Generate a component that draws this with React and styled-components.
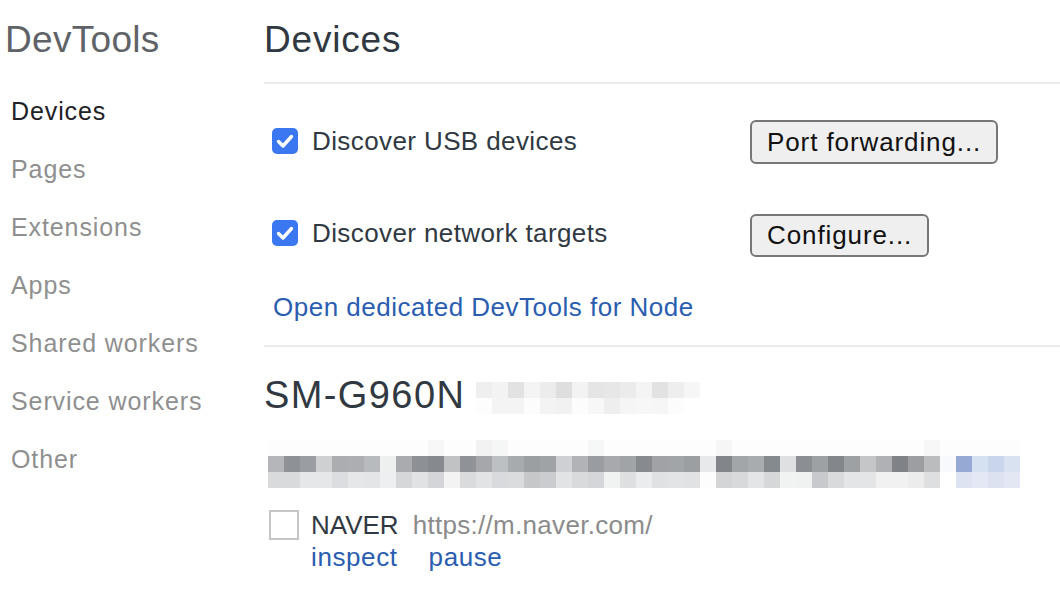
import React from "react";
import styled, { createGlobalStyle } from "styled-components";

const GlobalStyle = createGlobalStyle`
  body {
    margin: 0;
    background: #ffffff;
    font-family: "Liberation Sans", Arial, sans-serif;
  }
`;

const Page = styled.div`
  display: flex;
  width: 1060px;
  height: 598px;
  overflow: hidden;
`;

const Sidebar = styled.nav`
  width: 264px;
  flex-shrink: 0;
  display: flex;
  flex-direction: column;
`;

const SideTitle = styled.h1`
  margin: 0 0 2px;
  padding-left: 5px;
  height: 80px;
  line-height: 80px;
  font-size: 37px;
  font-weight: 400;
  letter-spacing: 0.3px;
  color: #5f6368;
`;

const SideItem = styled.div`
  padding-left: 11px;
  height: 58px;
  line-height: 58px;
  font-size: 25px;
  letter-spacing: 0.9px;
  color: ${(p) => (p.active ? "#202124" : "#8f8f8f")};
`;

const Main = styled.main`
  flex: 1;
  display: flex;
  flex-direction: column;
`;

const Header = styled.div`
  height: 82px;
  border-bottom: 2px solid #ebebeb;
`;

const Heading = styled.h1`
  margin: 0;
  line-height: 80px;
  font-size: 37px;
  font-weight: 400;
  letter-spacing: 0.8px;
  color: #303942;
`;

const Options = styled.section`
  display: flex;
  flex-direction: column;
  gap: 48px;
  padding: 35px 0 0 8px;
`;

const OptionRow = styled.div`
  display: flex;
  align-items: center;
  height: 44px;
`;

const Label = styled.label`
  display: flex;
  align-items: center;
  gap: 14px;
  width: 478px;
  font-size: 26px;
  letter-spacing: 0.4px;
  color: #303942;
`;

const Check = styled.span`
  width: 26px;
  height: 26px;
  border-radius: 5px;
  background: #3a77f0;
  display: flex;
  align-items: center;
  justify-content: center;
`;

const Button = styled.button`
  height: ${(p) => p.h}px;
  padding: 0 15px;
  margin-top: ${(p) => p.top}px;
  border: 2px solid #777777;
  border-radius: 6px;
  background: #efefef;
  font-family: "Liberation Sans", Arial, sans-serif;
  font-size: 26px;
  letter-spacing: 0.9px;
  color: #111111;
`;

const NodeLink = styled.a`
  display: block;
  margin: 37px 0 0 9px;
  line-height: 30px;
  font-size: 26px;
  letter-spacing: 0.5px;
  color: #2a5db0;
  text-decoration: none;
`;

const Divider = styled.div`
  margin-top: 23px;
  height: 2px;
  background: #ebebeb;
`;

const DeviceHead = styled.div`
  display: flex;
  align-items: center;
  gap: 11px;
  margin-top: 26px;
  height: 44px;
`;

const DeviceName = styled.h2`
  margin: 0;
  font-size: 38px;
  font-weight: 400;
  letter-spacing: 1.4px;
  color: #303942;
`;

const Mosaic = styled.svg`
  display: block;
  flex-shrink: 0;
  margin: ${(p) => p.m || "0"};
`;

const Target = styled.div`
  display: flex;
  align-items: flex-start;
  gap: 12px;
  margin: 21px 0 0 5px;
`;

const EmptyBox = styled.span`
  width: 26px;
  height: 26px;
  margin-top: 1px;
  border: 2px solid #c6c6c6;
`;

const TargetText = styled.div`
  display: flex;
  flex-direction: column;
  font-size: 26px;
  line-height: 32px;
  letter-spacing: 0.3px;
`;

const TargetLine = styled.div`
  display: flex;
  gap: ${(p) => p.gap}px;
`;

const Name = styled.span`
  color: #303942;
  letter-spacing: 0;
`;

const Url = styled.span`
  color: #8b8b8b;
`;

const Action = styled.a`
  color: #2a5db0;
  letter-spacing: 0.6px;
  text-decoration: none;
`;

const titleCells = [
  ["#efefef", "#f3f3f3", "#e2e2e2", "#f4f4f4", "#ececec", "#dedede", "#f3f3f3", "#e5e5e5", "#e7e7e7", "#ebebeb", "#f4f4f4", "#e2e2e2", "#eeeeee", "#f6f6f6"],
  ["#fdfdfd", "#f4f4f4", "#f4f4f4", "#fcfcfc", "#f3f3f3", "#f1f1f1", "#fcfcfc", "#f7f7f7", "#eeeeee", "#f5f5f5", "#f7f7f7", "#f6f6f6", "#fcfcfc", "#ffffff"],
];

const faint = Array(47).fill("#fdfdfd");
[[10, "#f6f7f6"], [13, "#f2f2f2"], [14, "#f5f6f6"], [20, "#f6f7f7"], [28, "#f6f6f6"], [41, "#f6f7f6"]].forEach(
  ([i, c]) => (faint[i] = c)
);

const serialCells = [
  faint,
  [
    "#b4b6b9", "#8e9195", "#9a9da1", "#cfd0d2", "#abadb1", "#adaeb1", "#b8bbbe", "#eeefef", "#a9abae", "#8d9196",
    "#868a8f", "#c1c2c4", "#8f9297", "#a5a7ab", "#bdc0c3", "#a8abad", "#9b9fa2", "#a0a3a5", "#cfd0d3", "#b1b3b6",
    "#999ca0", "#a8a9ad", "#a1a4a7", "#878b8f", "#a0a2a5", "#a2a5a8", "#9c9fa2", "#e8e9ea", "#82868b", "#a3a6a8",
    "#a9acae", "#858a8e", "#dfe0e1", "#8b8e93", "#9ea1a4", "#83878b", "#9ea1a3", "#c5c6c8", "#afb1b4", "#7f8287",
    "#9c9ea2", "#bbbcbe", "#f7f9fd", "#96a8d4", "#d5e0f1", "#c8d5ea", "#d8e2f0",
  ],
  [
    "#d9dadc", "#d9dadc", "#e6e7e8", "#e6e7e8", "#dcdde0", "#e6e7e9", "#e4e5e7", "#eeeff0", "#d6d7d9", "#e1e2e4",
    "#d4d5d8", "#f3f3f3", "#dadbdd", "#e2e3e5", "#d9dadd", "#dbdcde", "#c6c7c9", "#cbcccf", "#e2e3e5", "#d9dadc",
    "#d5d6d9", "#f1f2f2", "#dedfe1", "#ebecee", "#e0e1e3", "#e3e4e6", "#e1e2e4", "#fdfdfd", "#d4d5d7", "#d8d9db",
    "#e4e5e7", "#d6d7d9", "#f1f2f2", "#f0f1f1", "#c8c9cc", "#d9dadc", "#e4e5e6", "#e4e5e6", "#f1f1f2", "#f1f1f2",
    "#ececed", "#dedfe0", "#ffffff", "#dde3f1", "#e3e8f4", "#dde2f1", "#e3e7f3",
  ],
];

const Pixelated = ({ rows, m }) => {
  const w = rows[0].length * 16;
  const h = rows.length * 16;
  return (
    <Mosaic width={w} height={h} m={m}>
      {rows.map((row, r) =>
        row.map((c, i) => <rect key={r + "-" + i} x={i * 16} y={r * 16} width="16" height="16" fill={c} />)
      )}
    </Mosaic>
  );
};

const CheckMark = () => (
  <svg width="26" height="26" viewBox="0 0 26 26">
    <path d="M6.5 13.5 L11 18 L19.5 8.5" fill="none" stroke="#fff" strokeWidth="3.4" strokeLinecap="round" strokeLinejoin="round" />
  </svg>
);

const sideItems = ["Devices", "Pages", "Extensions", "Apps", "Shared workers", "Service workers", "Other"];

export default function App() {
  return (
    <Page>
      <GlobalStyle />
      <Sidebar>
        <SideTitle>DevTools</SideTitle>
        {sideItems.map((item, i) => (
          <SideItem key={item} active={i === 0}>
            {item}
          </SideItem>
        ))}
      </Sidebar>
      <Main>
        <Header>
          <Heading>Devices</Heading>
        </Header>
        <Options>
          <OptionRow>
            <Label>
              <Check>
                <CheckMark />
              </Check>
              Discover USB devices
            </Label>
            <Button h={44} top={2}>Port forwarding...</Button>
          </OptionRow>
          <OptionRow>
            <Label>
              <Check>
                <CheckMark />
              </Check>
              Discover network targets
            </Label>
            <Button h={43} top={4}>Configure...</Button>
          </OptionRow>
        </Options>
        <NodeLink href="#">Open dedicated DevTools for Node</NodeLink>
        <Divider />
        <DeviceHead>
          <DeviceName>SM-G960N</DeviceName>
          <Pixelated rows={titleCells} m="6px 0 0" />
        </DeviceHead>
        <Pixelated rows={serialCells} m="23px 0 0 4px" />
        <Target>
          <EmptyBox />
          <TargetText>
            <TargetLine gap={14}>
              <Name>NAVER</Name>
              <Url>https://m.naver.com/</Url>
            </TargetLine>
            <TargetLine gap={31}>
              <Action href="#">inspect</Action>
              <Action href="#">pause</Action>
            </TargetLine>
          </TargetText>
        </Target>
      </Main>
    </Page>
  );
}
